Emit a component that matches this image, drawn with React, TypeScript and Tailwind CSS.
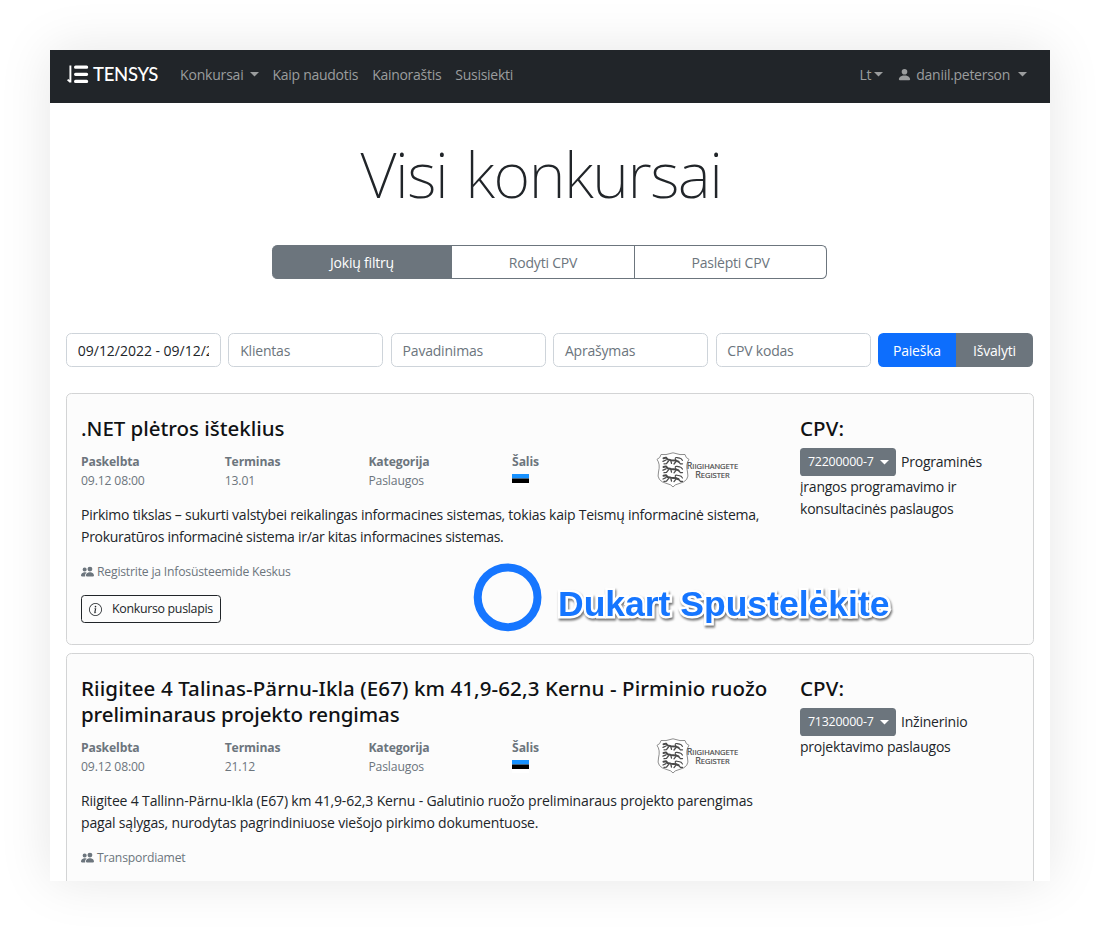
import { BsPersonFill, BsInfoCircle, BsPeopleFill } from "react-icons/bs";

function Caret({ className = "" }: { className?: string }) {
  return (
    <svg className={`shrink-0 ${className}`} width="9" height="5" viewBox="0 0 9 5" fill="currentColor">
      <path d="M0 0H9L4.5 4.6Z" />
    </svg>
  );
}

function Logo() {
  return (
    <a className="-mt-[1px] flex h-[21px] items-center text-white">
      <svg width="22" height="19" viewBox="0 0 22 19" fill="none" stroke="currentColor" strokeLinecap="round">
        <path d="M3.4 .6V17.4M3.4 17L0.6 14.6" strokeWidth="1.9" strokeLinecap="butt" />
        <path d="M8.6 2.2H19.6M8.6 9.3H19.6M8.6 16.4H19.6" strokeWidth="3.2" />
      </svg>
      <span className="ml-[4px] font-[Lato] text-[18.5px] font-medium leading-[21px] tracking-[-0.3px]">TENSYS</span>
    </a>
  );
}

function Navbar() {
  return (
    <nav className="flex h-[53px] shrink-0 items-center bg-[#212529] pb-[4px] pl-[17px] pr-[23px] text-[14px] tracking-[-0.28px] text-[#9b9d9e]">
      <Logo />
      <div className="ml-[22px] flex items-center gap-[14px]">
        <span className="flex items-center tracking-[-0.2px]">
          Konkursai
          <Caret className="ml-[6px]" />
        </span>
        <span>Kaip naudotis</span>
        <span>Kainoraštis</span>
        <span>Susisiekti</span>
      </div>
      <div className="ml-auto flex items-center">
        <span>Lt</span>
        <Caret className="ml-[3px]" />
        <BsPersonFill className="ml-[14px] h-[15px] w-[15px]" />
        <span className="ml-[4px]">daniil.peterson</span>
        <Caret className="ml-[8px]" />
      </div>
    </nav>
  );
}

function FilterTabs() {
  return (
    <div className="ml-[222px] mt-[34px] flex h-[34px] w-[555px] shrink-0 text-center text-[14px] leading-[34px] tracking-[-0.2px] text-[#6c757d]">
      <div className="w-[180px] rounded-l-[5.4px] border-y border-[#6c757d] bg-[#6c757d] text-white">Jokių filtrų</div>
      <div className="w-[183px] border-y border-r border-[#6c757d]">Rodyti CPV</div>
      <div className="flex-1 rounded-r-[5.4px] border-y border-r border-[#6c757d]">Paslėpti CPV</div>
    </div>
  );
}

function SearchRow() {
  const fields = ["Klientas", "Pavadinimas", "Aprašymas", "CPV kodas"];
  const box = "h-[34px] w-[155px] rounded-[5.4px] border border-[#ced4da] px-[10.8px] leading-[34px]";
  return (
    <div className="mt-[54px] flex h-[35px] shrink-0 gap-[7.4px] px-[16px] text-[14px] tracking-[-0.2px]">
      <div className={box}>
        <div className="h-[32px] overflow-hidden whitespace-nowrap tracking-[-0.02px] text-[#212529]">
          09/12/2022 - 09/12/2022
        </div>
      </div>
      {fields.map((f) => (
        <div key={f} className={`${box} text-[#6c757d]`}>{f}</div>
      ))}
      <div className="flex h-[34px] w-[155px] overflow-hidden rounded-[5.4px] text-center leading-[36px] text-white">
        <div className="w-[78px] bg-[#0d6efd]">Paieška</div>
        <div className="flex-1 bg-[#6c757d]">Išvalyti</div>
      </div>
    </div>
  );
}

function Lion({ y }: { y: number }) {
  return (
    <g transform={`translate(6 ${y})`} stroke="#4a4a4a" fill="none" strokeLinecap="round" strokeLinejoin="round">
      <path d="M1.5 1.2L4 .6L5.5 2.4L9 3.2L14 3.6L16.5 4.6" strokeWidth="2" />
      <path d="M4 3L1 4.4M6.5 4L4.5 6.6L2 6.8M9 4.4L9.5 6.4M14 4.5L12 7M16.5 4.6L18.4 6.8H20.5" strokeWidth="1.3" />
      <path d="M14 3.4Q12 .2 15 .6T19 1.6L20.5 3.4" strokeWidth="1.1" />
    </g>
  );
}

function RegisterLogo() {
  return (
    <div className="flex h-[36px] items-center text-[#4a4a4a]">
      <svg className="shrink-0" width="34" height="36" viewBox="0 0 34 36">
        <path
          d="M5 2.5Q9 3.5 17 .8Q25 3.5 29 2.5Q29.5 6 33 7.4Q29.5 12 31.5 20Q34 29 23 31.6Q18.5 32.5 17 35Q15.5 32.5 11 31.6Q0 29 2.5 20Q4.5 12 1 7.4Q4.5 6 5 2.5Z"
          fill="#fff"
          stroke="#808080"
          strokeWidth="0.9"
        />
        <Lion y={5} />
        <Lion y={13.8} />
        <Lion y={22.6} />
      </svg>
      <div className="-ml-[3px] text-center text-[7.5px] font-normal leading-[9px] tracking-[0.02px] [-webkit-text-stroke:0.2px_#4a4a4a]">
        <div className="h-[9px]"><span className="text-[9px]">R</span>IIGIHANGETE</div>
        <div className="h-[9px]"><span className="text-[9px]">R</span>EGISTER</div>
      </div>
    </div>
  );
}

interface Line {
  text: string;
  tracking: string;
}

interface Tender {
  title: Line[];
  published: string;
  due: string;
  description: Line[];
  client: string;
  hasPage: boolean;
  cpv: string;
  cpvText: string[];
}

const tenders: Tender[] = [
  {
    title: [{ text: ".NET plėtros išteklius", tracking: "tracking-[-0.03px]" }],
    published: "09.12 08:00",
    due: "13.01",
    description: [
      {
        text: "Pirkimo tikslas – sukurti valstybei reikalingas informacines sistemas, tokias kaip Teismų informacinė sistema,",
        tracking: "tracking-[-0.245px]",
      },
      {
        text: "Prokuratūros informacinė sistema ir/ar kitas informacines sistemas.",
        tracking: "tracking-[-0.28px]",
      },
    ],
    client: "Registrite ja Infosüsteemide Keskus",
    hasPage: true,
    cpv: "72200000-7",
    cpvText: ["Programinės", "įrangos programavimo ir", "konsultacinės paslaugos"],
  },
  {
    title: [
      {
        text: "Riigitee 4 Talinas-Pärnu-Ikla (E67) km 41,9-62,3 Kernu - Pirminio ruožo",
        tracking: "tracking-[0.1px]",
      },
      { text: "preliminaraus projekto rengimas", tracking: "tracking-[-0.1px]" },
    ],
    published: "09.12 08:00",
    due: "21.12",
    description: [
      {
        text: "Riigitee 4 Tallinn-Pärnu-Ikla (E67) km 41,9-62,3 Kernu - Galutinio ruožo preliminaraus projekto parengimas",
        tracking: "tracking-[-0.16px]",
      },
      {
        text: "pagal sąlygas, nurodytas pagrindiniuose viešojo pirkimo dokumentuose.",
        tracking: "tracking-[-0.18px]",
      },
    ],
    client: "Transpordiamet",
    hasPage: false,
    cpv: "71320000-7",
    cpvText: ["Inžinerinio", "projektavimo paslaugos"],
  },
];

function Meta({ label, value }: { label: string; value: string }) {
  return (
    <div className="w-[143.7px]">
      <div className="font-bold">{label}</div>
      <div>{value}</div>
    </div>
  );
}

const heading = "font-['Noto_Sans'] text-[20.5px] font-medium leading-[26px] text-[#101214]";

function Card({ tender }: { tender: Tender }) {
  return (
    <article className="mx-[16px] flex h-[252px] shrink-0 whitespace-nowrap rounded-[5.4px] border border-[#d3d4d5] bg-[#fcfcfc] pl-[14px] pt-[21px]">
      <div className="w-[719px]">
        <h5 className={heading}>
          {tender.title.map((t) => <div key={t.text} className={t.tracking}>{t.text}</div>)}
        </h5>
        <div className="mt-[11px] flex h-[38px] text-[12.2px] leading-[19px] tracking-[-0.15px] text-[#6c757d]">
          <Meta label="Paskelbta" value={tender.published} />
          <Meta label="Terminas" value={tender.due} />
          <Meta label="Kategorija" value="Paslaugos" />
          <div className="w-[143.7px]">
            <div className="font-bold">Šalis</div>
            <svg className="mt-[3px]" width="17" height="13" viewBox="0 0 17 13">
              <rect width="17" height="4.5" fill="#1791ff" />
              <rect y="4.5" width="17" height="4.5" fill="#000" />
              <rect y="9" width="17" height="4" fill="#fff" />
            </svg>
          </div>
          <RegisterLogo />
        </div>
        <div className="mt-[14px] text-[14px] leading-[21.6px] text-[#212529]">
          {tender.description.map((t) => <div key={t.text} className={t.tracking}>{t.text}</div>)}
        </div>
        <div className="mt-[15px] flex h-[19px] items-center gap-[3px] text-[12.2px] tracking-[-0.2px] text-[#6c757d]">
          <BsPeopleFill className="h-[13px] w-[13px]" />
          {tender.client}
        </div>
        {tender.hasPage && (
          <button className="mt-[14px] flex h-[28px] w-[140px] items-center rounded-[3.6px] border border-[#212529] pl-[7px] text-[12.4px] tracking-[-0.31px] text-[#212529]">
            <BsInfoCircle className="mr-[10px] h-[13px] w-[13px]" />
            Konkurso puslapis
          </button>
        )}
      </div>
      <div className="text-[14px] leading-[21.6px] tracking-[-0.22px] text-[#212529]">
        <h5 className={`mb-[7px] tracking-[0.1px] ${heading}`}>CPV:</h5>
        <div className="flex h-[28px] items-center">
          <span className="mr-[5px] flex h-[28px] w-[96px] items-center justify-between rounded-[3.6px] bg-[#6c757d] pl-[8px] pr-[7px] text-[12.4px] text-white">
            {tender.cpv}
            <Caret />
          </span>
          {tender.cpvText[0]}
        </div>
        {tender.cpvText.slice(1).map((t) => <div key={t}>{t}</div>)}
      </div>
    </article>
  );
}

function ClickHint() {
  return (
    <div className="absolute left-[423px] top-[512px] flex items-start whitespace-nowrap">
      <svg width="69" height="70" viewBox="0 0 69 70">
        <circle cx="34.6" cy="35.3" r="29.9" fill="none" stroke="#1676ff" strokeWidth="8" />
      </svg>
      <div className="ml-[16px] mt-[21px] font-['Liberation_Sans'] text-[35.5px] font-bold leading-[42px] text-[#1676ff] [paint-order:stroke_fill] [-webkit-text-stroke:5px_#fff] [filter:drop-shadow(1px_2px_1px_rgba(0,0,0,0.55))]">
        Dukart Spustelėkite
      </div>
    </div>
  );
}

export default function App() {
  return (
    <main className="h-[931px] w-[1100px] overflow-hidden bg-white p-[50px] font-['Open_Sans','Noto_Sans',sans-serif]">
      <div className="h-[831px] w-[1000px] shadow-[0_0_50px_rgba(0,0,0,0.1)]">
        <div className="relative flex h-full flex-col overflow-hidden bg-white">
          <Navbar />
          <h1 className="mt-[34px] h-[74px] pr-[18px] text-center font-['Noto_Sans'] text-[63px] font-extralight leading-[74px] tracking-[-1.4px] text-[#212529] [word-spacing:3px]">
            Visi konkursai
          </h1>
          <FilterTabs />
          <SearchRow />
          <section className="mt-[25px] flex flex-col gap-[8px]">
            {tenders.map((t) => <Card key={t.client} tender={t} />)}
          </section>
          <ClickHint />
        </div>
      </div>
    </main>
  );
}
